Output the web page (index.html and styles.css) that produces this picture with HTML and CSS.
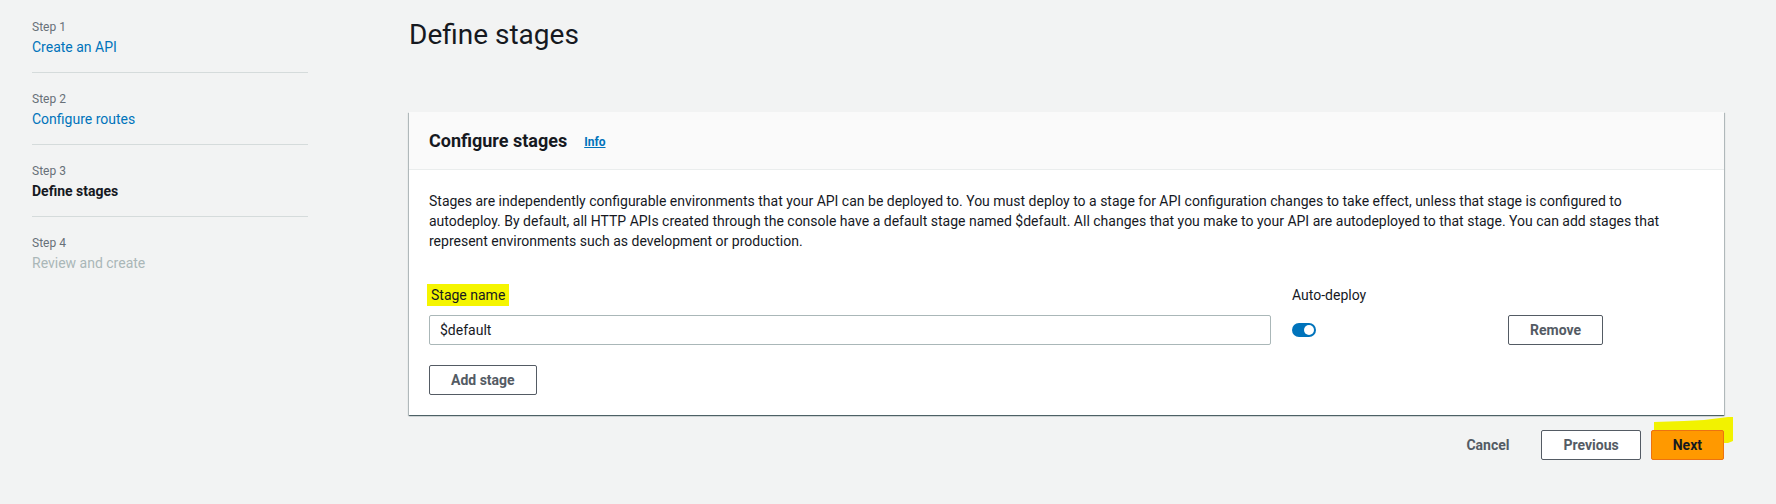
FILE: index.html
```html
<!DOCTYPE html>
<html lang="en">
<head>
<meta charset="utf-8">
<title>Define stages</title>
<link rel="stylesheet" href="styles.css">
</head>
<body>
<div class="layout">
  <nav class="steps">
    <div class="step">
      <div class="step-label">Step 1</div>
      <a class="step-link" href="#">Create an API</a>
    </div>
    <div class="step">
      <div class="step-label">Step 2</div>
      <a class="step-link" href="#">Configure routes</a>
    </div>
    <div class="step">
      <div class="step-label">Step 3</div>
      <div class="step-current">Define stages</div>
    </div>
    <div class="step step-last">
      <div class="step-label">Step 4</div>
      <div class="step-disabled">Review and create</div>
    </div>
  </nav>
  <main class="main">
    <h1 class="page-title">Define stages</h1>
    <section class="card">
      <header class="card-header">
        <h2 class="card-title">Configure stages</h2>
        <a class="info-link" href="#">Info</a>
      </header>
      <div class="card-body">
        <p class="desc">Stages are independently configurable environments that your API can be deployed to. You must deploy to a stage for API configuration changes to take effect, unless that stage is configured to<br>autodeploy. By default, all HTTP APIs created through the console have a default stage named $default. All changes that you make to your API are autodeployed to that stage. You can add stages that<br>represent environments such as development or production.</p>
        <div class="stage-grid">
          <div class="field-label"><span class="highlight">Stage name</span></div>
          <div class="field-label">Auto-deploy</div>
          <div></div>
          <input class="text-input" type="text" value="$default">
          <div class="toggle-cell"><span class="toggle"><span class="toggle-knob"></span></span></div>
          <div class="remove-cell"><button class="btn" type="button">Remove</button></div>
        </div>
        <button class="btn btn-add" type="button">Add stage</button>
      </div>
    </section>
    <div class="actions">
      <button class="btn btn-link" type="button">Cancel</button>
      <button class="btn" type="button">Previous</button>
      <span class="next-wrap">
        <svg class="scribble" width="80" height="26" viewBox="0 0 80 26"><polygon points="0,5 30,4 50,3 74,0 79,0 79,24 74,26 0,26" fill="#f2f200"/></svg>
        <button class="btn btn-primary" type="button">Next</button>
      </span>
    </div>
  </main>
</div>
</body>
</html>
```

FILE: styles.css
```css
* { box-sizing: border-box; }
html, body { margin: 0; padding: 0; }
body {
  background: #f2f3f3;
  font-family: Roboto, "Liberation Sans", sans-serif;
  color: #16191f;
  font-size: 14px;
  line-height: 20px;
  width: 1776px;
  height: 504px;
  overflow: hidden;
}
.layout { display: flex; align-items: flex-start; }
.steps { width: 276px; margin-left: 32px; padding-top: 1px; flex: none; }
.step { padding: 17px 0 14px; border-bottom: 1px solid #d5dbdb; }
.step-last { border-bottom: none; }
.step-label { font-size: 12px; line-height: 18px; color: #687078; }
.step-link, .step-current, .step-disabled { display: block; font-size: 14px; line-height: 22px; text-decoration: none; }
.step-link { color: #0073bb; }
.step-current { font-weight: 700; color: #16191f; }
.step-disabled { color: #aab7b8; }

.main { flex: 1; margin-left: 101px; margin-right: 52px; }
.page-title { margin: 0; padding-top: 17px; font-size: 28px; line-height: 36px; font-weight: 400; color: #16191f; }

.card {
  margin-top: 59px;
  background: #fff;
  box-shadow: 0 1px 1px 0 rgba(0,28,36,.5), 1px 1px 1px 0 rgba(0,28,36,.2), -1px 1px 1px 0 rgba(0,28,36,.2);
}
.card-header {
  height: 58px;
  display: flex; align-items: center; gap: 17px;
  padding: 0 20px;
  background: #fafafa;
  border-bottom: 1px solid #eaeded;
}
.card-title { margin: 0; font-size: 18px; line-height: 22px; font-weight: 700; }
.info-link { font-size: 12px; font-weight: 700; color: #0073bb; text-decoration: underline; margin-top: 3px; }
.card-body { padding: 21px 20px 20px; }
.desc { margin: 0; font-size: 14px; line-height: 20px; }

.stage-grid {
  display: grid;
  grid-template-columns: 842px 195px auto;
  column-gap: 21px;
  row-gap: 9px;
  margin-top: 33px;
  align-items: center;
}
.field-label { font-size: 14px; line-height: 22px; }
.highlight { display: inline-block; background: #f5f500; padding: 0 4px; margin-left: -2px; }
.text-input {
  height: 30px; width: 100%;
  border: 1px solid #aab7b8; border-radius: 2px;
  padding: 0 10px;
  font: inherit; font-size: 14px; color: #16191f;
  background: #fff;
}
.toggle-cell { display: flex; align-items: center; }
.toggle { width: 24px; height: 14px; border-radius: 7px; background: #0073bb; display: flex; align-items: center; justify-content: flex-end; padding: 0 2px; }
.toggle-knob { width: 10px; height: 10px; border-radius: 50%; background: #fff; }

.btn {
  height: 30px; padding: 0 21px;
  border: 1px solid #545b64; border-radius: 2px;
  background: #fff; color: #545b64;
  font-family: inherit; font-size: 14px; font-weight: 700; line-height: 20px;
}
.btn-add { margin-top: 20px; }
.actions { display: flex; justify-content: flex-end; align-items: center; gap: 10px; margin-top: 15px; }
.btn-link { border-color: transparent; background: transparent; }
.btn-primary { background: #ff9900; border-color: #ec7211; color: #16191f; }
.next-wrap { position: relative; display: inline-flex; }
.next-wrap .btn-primary { position: relative; }
.scribble { position: absolute; left: 3px; top: -13px; }
```
